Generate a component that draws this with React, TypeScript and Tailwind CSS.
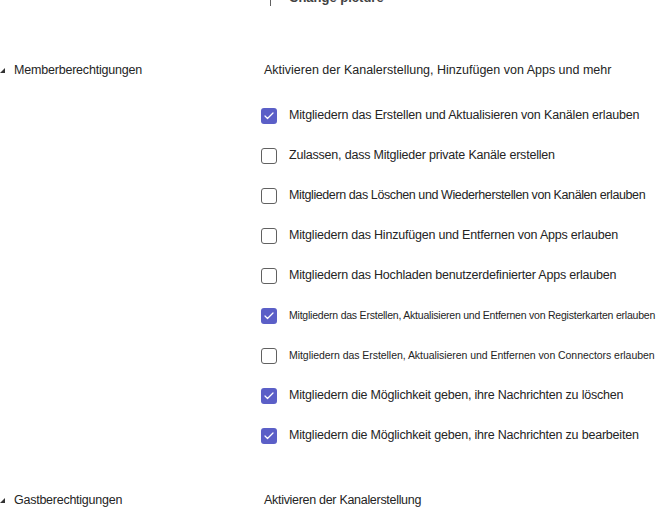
import { Check } from "lucide-react";

const rows: { label: string; checked: boolean; cls: string }[] = [
  { label: "Mitgliedern das Erstellen und Aktualisieren von Kanälen erlauben", checked: true, cls: "text-[12.5px] tracking-[-0.16px]" },
  { label: "Zulassen, dass Mitglieder private Kanäle erstellen", checked: false, cls: "text-[12.5px] tracking-[-0.2px]" },
  { label: "Mitgliedern das Löschen und Wiederherstellen von Kanälen erlauben", checked: false, cls: "text-[12.5px] tracking-[-0.4px]" },
  { label: "Mitgliedern das Hinzufügen und Entfernen von Apps erlauben", checked: false, cls: "text-[12.5px] tracking-[-0.2px]" },
  { label: "Mitgliedern das Hochladen benutzerdefinierter Apps erlauben", checked: false, cls: "text-[12.5px] tracking-[-0.2px]" },
  { label: "Mitgliedern das Erstellen, Aktualisieren und Entfernen von Registerkarten erlauben", checked: true, cls: "text-[10.5px] tracking-[-0.22px]" },
  { label: "Mitgliedern das Erstellen, Aktualisieren und Entfernen von Connectors erlauben", checked: false, cls: "text-[10.5px] tracking-[-0.05px]" },
  { label: "Mitgliedern die Möglichkeit geben, ihre Nachrichten zu löschen", checked: true, cls: "text-[12.5px] tracking-[-0.2px]" },
  { label: "Mitgliedern die Möglichkeit geben, ihre Nachrichten zu bearbeiten", checked: true, cls: "text-[12.5px] tracking-[-0.2px]" },
];

function Caret() {
  return (
    <svg width="5" height="5" viewBox="0 0 5 5" className="shrink-0">
      <polygon points="5,0 5,5 0,5" fill="#333" />
    </svg>
  );
}

function Box({ checked }: { checked: boolean }) {
  return checked ? (
    <div className="w-4 h-4 rounded-[3px] bg-[#5b5fc7] flex items-center justify-center shrink-0">
      <Check className="w-3 h-3 text-white" strokeWidth={2.5} />
    </div>
  ) : (
    <div className="w-4 h-4 rounded-[3px] border border-[#616161] bg-white shrink-0" />
  );
}

export default function App() {
  return (
    <div className="w-[671px] h-[521px] overflow-hidden bg-white text-[#242424] font-['Liberation_Sans',Arial,sans-serif]">
      {/* cut-off picture row */}
      <div className="flex items-center h-4 -mt-[10px] pl-[270px]">
        <div className="w-px h-4 bg-[#616161]" />
        <span className="ml-[18px] text-[13px] font-semibold text-[#424242]">Change picture</span>
      </div>

      {/* Member permissions */}
      <div className="flex items-center mt-[55px]">
        <div className="w-[264px] flex items-center gap-[9px]">
          <Caret />
          <span className="text-[12.5px] tracking-[-0.2px]">Memberberechtigungen</span>
        </div>
        <span className="text-[12.5px]">Aktivieren der Kanalerstellung, Hinzufügen von Apps und mehr</span>
      </div>

      <div className="flex flex-col pl-[261px] mt-[16px]">
        {rows.map((r) => (
          <div key={r.label} className="h-10 flex items-center gap-3">
            <Box checked={r.checked} />
            <span className={"whitespace-nowrap " + r.cls}>{r.label}</span>
          </div>
        ))}
      </div>

      {/* Guest permissions */}
      <div className="flex items-center mt-[35px]">
        <div className="w-[264px] flex items-center gap-[9px]">
          <Caret />
          <span className="text-[12.5px] tracking-[-0.25px]">Gastberechtigungen</span>
        </div>
        <span className="text-[12.5px] tracking-[-0.3px]">Aktivieren der Kanalerstellung</span>
      </div>
    </div>
  );
}
